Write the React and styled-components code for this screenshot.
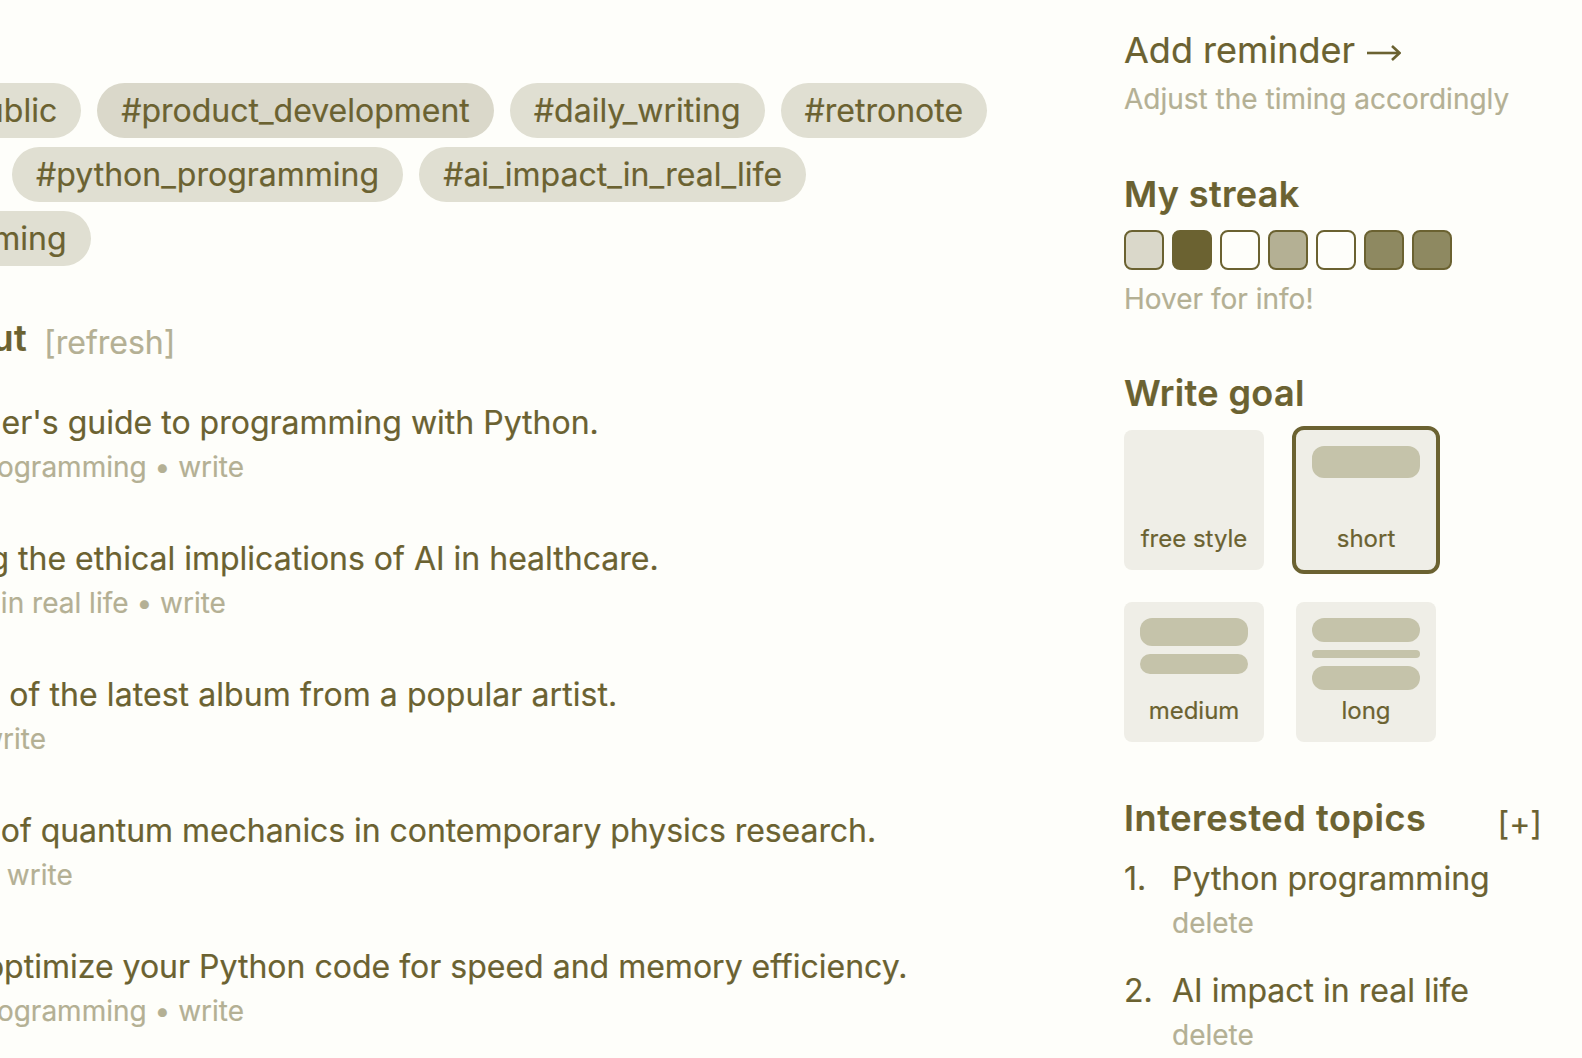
import React from "react";
import styled, { createGlobalStyle } from "styled-components";

const GlobalStyle = createGlobalStyle`
	html, body {
		margin: 0;
		padding: 0;
		background: #fefefa;
		overflow: hidden;
	}
	* {
		box-sizing: border-box;
	}
`;

const Page = styled.div`
	width: 1582px;
	height: 1058px;
	overflow: hidden;
	display: flex;
	font-family: Inter, "Liberation Sans", sans-serif;
	color: #6b6231;
	background: #fefefa;
	-webkit-text-stroke: 0.2px currentColor;
`;

const Main = styled.main`
	width: 1124px;
	flex: none;
	padding-top: 83px;
	overflow: hidden;
`;

const TagRow = styled.div`
	display: flex;
	gap: 16px;
	height: 55px;
	margin-bottom: 9px;
	margin-left: ${props => props.$offset}px;
`;

const Tag = styled.span`
	display: flex;
	align-items: center;
	flex: none;
	padding: 0 24px;
	border-radius: 28px;
	font-size: 32px;
	background: ${props => (props.$active ? "#dad8ca" : "#e0dfd2")};
`;

const Heading = styled.h2`
	display: flex;
	align-items: flex-start;
	gap: 17px;
	margin: 50px 0 -2px -321px;
	font-size: 36px;
	line-height: 44px;
	font-weight: 600;
	letter-spacing: 0.35px;
	white-space: nowrap;
`;

const Refresh = styled.span`
	margin-top: 5px;
	font-size: 32px;
	font-weight: 400;
	letter-spacing: 0;
	color: #b4b094;
`;

const Idea = styled.div`
	height: 136px;
	padding-top: 40px;
	margin-left: -130px;
	white-space: nowrap;
`;

const IdeaTitle = styled.div`
	font-size: 32px;
	line-height: 40px;
	margin-left: ${props => props.$offset}px;
	letter-spacing: ${props => props.$spacing || 0}px;
`;

const IdeaMeta = styled.div`
	font-size: 28px;
	line-height: 40px;
	margin-top: 4px;
	margin-left: ${props => props.$offset}px;
	color: #b4b094;
`;

const Side = styled.aside`
	flex: 1;
	padding-top: 27px;
`;

const Title = styled.div`
	display: flex;
	align-items: center;
	gap: 12px;
	font-size: 36px;
	line-height: 46px;
`;

const ArrowSvg = styled.svg`
	flex: none;
	margin-top: 6px;
	fill: none;
	stroke: #6b6231;
	stroke-width: 2.6;
`;

const Hint = styled.div`
	font-size: 28px;
	line-height: 40px;
	margin-top: ${props => props.$top}px;
	color: #b4b094;
`;

const SectionTitle = styled.h3`
	margin: ${props => props.$top}px 0 0;
	font-size: 36px;
	line-height: 44px;
	font-weight: 600;
	letter-spacing: 0.35px;
`;

const TopicTitle = styled(SectionTitle)`
	letter-spacing: 0.6px;
`;

const Streak = styled.div`
	display: flex;
	gap: 8px;
	margin-top: 14px;
`;

const Day = styled.div`
	width: 40px;
	height: 40px;
	border-radius: 8px;
	border: 2px solid #6b6231;
	background: ${props => props.$color};
`;

const Goals = styled.div`
	display: grid;
	grid-template-columns: 140px 140px;
	column-gap: 32px;
	row-gap: 32px;
	margin-top: 15px;
`;

const Goal = styled.div`
	position: relative;
	width: 140px;
	height: 140px;
	padding: 16px 16px 0;
	border-radius: 8px;
	background: #efeee7;
	display: flex;
	flex-direction: column;
	gap: 8px;
	&::after {
		content: "";
		display: ${props => (props.$selected ? "block" : "none")};
		position: absolute;
		inset: -4px;
		border: 4px solid #6b6231;
		border-radius: 12px;
	}
`;

const Bar = styled.div`
	height: ${props => props.$h}px;
	flex: none;
	border-radius: ${props => (props.$h < 10 ? 4 : 12)}px;
	background: #c5c3aa;
`;

const GoalLabel = styled.div`
	position: absolute;
	left: 0;
	right: 0;
	bottom: 16px;
	text-align: center;
	font-size: 24px;
	line-height: 30px;
`;

const TopicHeader = styled.div`
	display: flex;
	justify-content: space-between;
	align-items: flex-start;
	width: 418px;
	margin-top: 54px;
`;

const AddTopic = styled.span`
	margin-top: 6px;
	font-size: 32px;
	line-height: 44px;
`;

const Topic = styled.div`
	display: grid;
	grid-template-columns: 48px 1fr;
	margin-top: ${props => props.$top}px;
	font-size: 32px;
	line-height: 40px;
`;

const Delete = styled.div`
	grid-column: 2;
	font-size: 28px;
	line-height: 40px;
	margin-top: 4px;
	color: #b4b094;
`;

const ArrowIcon = () => (
	<ArrowSvg width="34" height="18" viewBox="0 0 34 18">
		<path d="M0 9H32" />
		<path d="M25 2L32.5 9L25 16" />
	</ArrowSvg>
);

const goals = [
	{ label: "free style", bars: [] },
	{ label: "short", bars: [32], selected: true },
	{ label: "medium", bars: [28, 20] },
	{ label: "long", bars: [24, 8, 24] },
];

const days = ["#dad8ca", "#6b6231", "#fefefa", "#b4b094", "#fefefa", "#8e8961", "#8e8961"];

const ideas = [
	{ title: "A beginner's guide to programming with Python.", offset: -3, meta: "python programming • write", metaOffset: 0 },
	{ title: "Exploring the ethical implications of AI in healthcare.", offset: -3, meta: "ai impact in real life • write", metaOffset: 3 },
	{ title: "A review of the latest album from a popular artist.", offset: -1, spacing: 0.07, meta: "music • write", metaOffset: 0 },
	{ title: "The role of quantum mechanics in contemporary physics research.", offset: -2, spacing: -0.06, meta: "physics • write", metaOffset: 4 },
	{ title: "How to optimize your Python code for speed and memory efficiency.", offset: -1, meta: "python programming • write", metaOffset: 0 },
];

export default function App() {
	return (
		<Page>
			<GlobalStyle />
			<Main>
				<TagRow $offset={-79}>
					<Tag>#public</Tag>
					<Tag $active>#product_development</Tag>
					<Tag>#daily_writing</Tag>
					<Tag>#retronote</Tag>
				</TagRow>
				<TagRow $offset={12}>
					<Tag>#python_programming</Tag>
					<Tag>#ai_impact_in_real_life</Tag>
				</TagRow>
				<TagRow $offset={-180}>
					<Tag>#programming</Tag>
				</TagRow>
				<Heading>
					What to write about
					<Refresh>[refresh]</Refresh>
				</Heading>
				{ideas.map(idea => (
					<Idea key={idea.title}>
						<IdeaTitle $offset={idea.offset} $spacing={idea.spacing}>
							{idea.title}
						</IdeaTitle>
						<IdeaMeta $offset={idea.metaOffset}>{idea.meta}</IdeaMeta>
					</Idea>
				))}
			</Main>
			<Side>
				<Title>
					Add reminder
					<ArrowIcon />
				</Title>
				<Hint $top={6}>Adjust the timing accordingly</Hint>
				<SectionTitle $top={53}>My streak</SectionTitle>
				<Streak>
					{days.map((color, i) => (
						<Day key={i} $color={color} />
					))}
				</Streak>
				<Hint $top={9}>Hover for info!</Hint>
				<SectionTitle $top={52}>Write goal</SectionTitle>
				<Goals>
					{goals.map(goal => (
						<Goal key={goal.label} $selected={goal.selected}>
							{goal.bars.map((h, i) => (
								<Bar key={i} $h={h} />
							))}
							<GoalLabel>{goal.label}</GoalLabel>
						</Goal>
					))}
				</Goals>
				<TopicHeader>
					<TopicTitle $top={0}>Interested topics</TopicTitle>
					<AddTopic>[+]</AddTopic>
				</TopicHeader>
				<Topic $top={13}>
					<span>1.</span>
					<span>Python programming</span>
					<Delete>delete</Delete>
				</Topic>
				<Topic $top={28}>
					<span>2.</span>
					<span>AI impact in real life</span>
					<Delete>delete</Delete>
				</Topic>
			</Side>
		</Page>
	);
}
